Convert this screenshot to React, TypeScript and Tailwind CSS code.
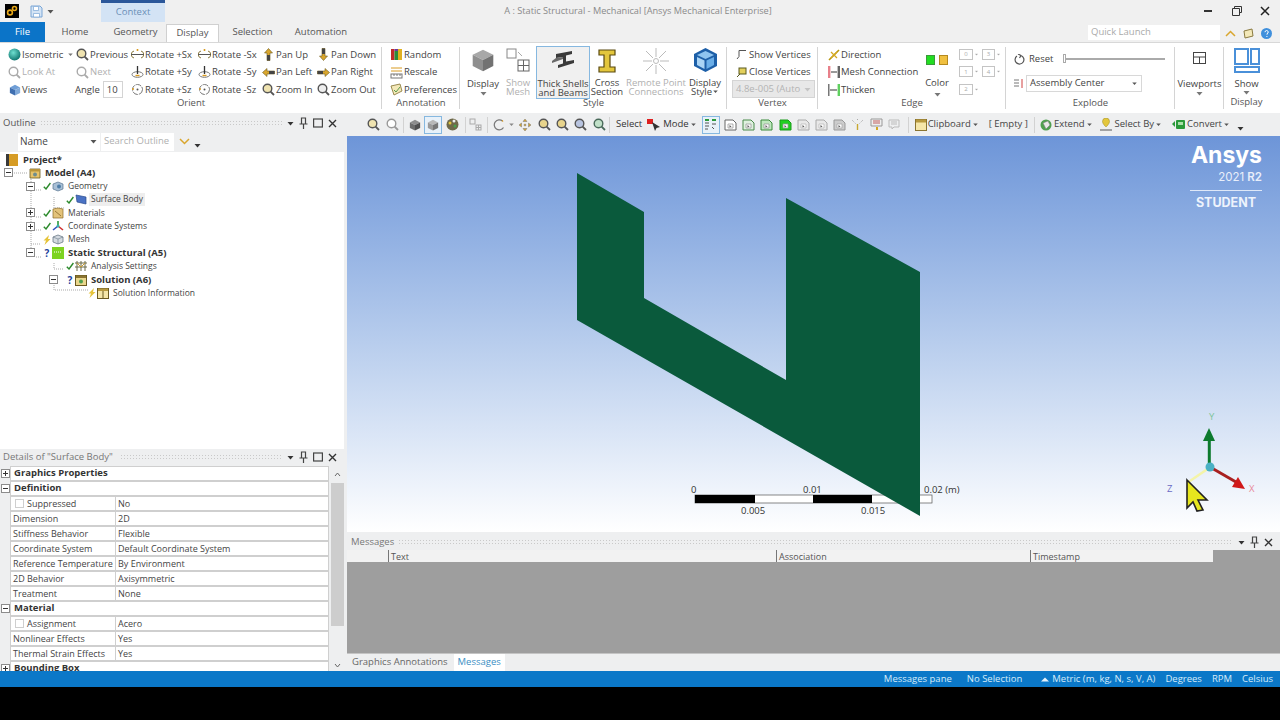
import React from "react";

type IconProps = { className?: string };

const Caret = ({ className = "fill-[#444]" }: IconProps) => (
	<svg width="7" height="5" viewBox="0 0 7 5" className={`shrink-0 ${className}`}>
		<path d="M0.5 1h6L3.5 4.5z" />
	</svg>
);

const Sphere = () => (
	<svg width="13" height="13" viewBox="0 0 13 13">
		<defs>
			<radialGradient id="sph" cx="0.4" cy="0.35" r="0.7">
				<stop offset="0" stopColor="#6fe0d0" />
				<stop offset="1" stopColor="#0a6f6a" />
			</radialGradient>
		</defs>
		<circle cx="6.5" cy="6.5" r="6" fill="url(#sph)" />
	</svg>
);

const Mag = ({ c = "#555", fill = "#efe3b0", faded = false }: { c?: string; fill?: string; faded?: boolean }) => (
	<svg width="13" height="13" viewBox="0 0 13 13" opacity={faded ? 0.45 : 1}>
		<circle cx="5.5" cy="5.5" r="4.3" fill={fill} stroke={c} strokeWidth="1.4" />
		<path d="M8.6 8.6L12 12" stroke={c} strokeWidth="1.8" />
	</svg>
);

const Rot = ({ axis }: { axis: "x" | "y" | "z" }) => (
	<svg width="13" height="13" viewBox="0 0 13 13" fill="none">
		{axis === "x" && (
			<>
				<path d="M3 10a3.6 3.6 0 0 1 0-7M10 3a3.6 3.6 0 0 1 0 7" stroke="#8a7a40" strokeWidth="1" />
				<path d="M0 6.5h13" stroke="#555" strokeWidth="1" />
				<path d="M6.5 1v2" stroke="#d89a20" strokeWidth="1.6" />
			</>
		)}
		{axis === "y" && (
			<>
				<ellipse cx="6.5" cy="8.5" rx="5.5" ry="2.8" stroke="#777" strokeWidth="1" />
				<path d="M6.5 0v8" stroke="#333" strokeWidth="1.3" />
				<path d="M4.5 9.5h4" stroke="#d89a20" strokeWidth="1.4" />
			</>
		)}
		{axis === "z" && (
			<>
				<circle cx="6.5" cy="6.5" r="5" stroke="#777" strokeWidth="1" strokeDasharray="6 1" />
				<circle cx="6.5" cy="6.5" r="1" fill="#555" />
				<path d="M1 6h2" stroke="#d89a20" strokeWidth="1.4" />
			</>
		)}
	</svg>
);

const Pan = ({ d }: { d: "up" | "down" | "left" | "right" }) => {
	const rot = { up: 0, right: 90, down: 180, left: 270 }[d];
	return (
		<svg width="13" height="13" viewBox="0 0 13 13">
			<g transform={`rotate(${rot} 6.5 6.5)`}>
				<path d="M6.5 0.5L10.5 5H8v7.5H5V5H2.5z" fill="#d9a62e" stroke="#6b5a20" strokeWidth="0.6" />
				<path d="M5 7h3v5.5H5z" fill="#444" />
			</g>
		</svg>
	);
};

const Box = ({ stroke = "#666", fill = "#fff", inner = "#999" }: { stroke?: string; fill?: string; inner?: string }) => (
	<svg width="13" height="13" viewBox="0 0 13 13">
		<path d="M1 2h8l3 3v7H1z" fill={fill} stroke={stroke} strokeWidth="1" />
		<path d="M4 6h5v4H4z" fill="#fff" stroke={inner} strokeWidth="0.8" />
		<path d="M5.5 7l2 1.5-2 1z" fill="#555" />
	</svg>
);

const Cube = ({ top = "#8d8d8d", left = "#6d6d6d", right = "#4f4f4f", s = 14 }: { top?: string; left?: string; right?: string; s?: number }) => (
	<svg width={s} height={s} viewBox="0 0 14 14">
		<path d="M7 1l6 3-6 3-6-3z" fill={top} />
		<path d="M1 4l6 3v6.5l-6-3z" fill={left} />
		<path d="M13 4L7 7v6.5l6-3z" fill={right} />
	</svg>
);

const Check = () => (
	<svg width="8" height="8" viewBox="0 0 8 8" fill="none" className="shrink-0">
		<path d="M0.8 4.8L3 7l4.4-6" stroke="#2c8a2c" strokeWidth="1.4" />
	</svg>
);
const Bolt = () => (
	<svg width="8" height="10" viewBox="0 0 8 10" className="shrink-0">
		<path d="M6 0L0.5 5.5H3L1.5 10 7.5 4H5z" fill="#e6c43a" />
	</svg>
);
const Quest = () => <span className="w-[8px] shrink-0 text-center text-[10px] font-bold leading-none text-[#1e3f9c]">?</span>;

const Expander = ({ open = true }: { open?: boolean }) => (
	<svg width="9" height="9" viewBox="0 0 9 9" className="shrink-0">
		<rect x="0.5" y="0.5" width="8" height="8" fill="#fff" stroke="#8c8c8c" />
		<path d="M2 4.5h5" stroke="#333" />
		{!open && <path d="M4.5 2v5" stroke="#333" />}
	</svg>
);

// outline tree icons
const Folder = ({ fill = "#e7c36a" }: { fill?: string }) => (
	<svg width="12" height="12" viewBox="0 0 12 12">
		<path d="M1 2h10v9H1z" fill={fill} stroke="#6b5a20" strokeWidth="0.8" />
		<path d="M1 2h10v2.5H1z" fill="#b99438" />
		<circle cx="6" cy="7.5" r="2" fill="#6f8d8d" />
	</svg>
);
const ProjectIcon = () => (
	<svg width="12" height="12" viewBox="0 0 12 12">
		<path d="M0 0h3v12H0z" fill="#3a3a3a" />
		<path d="M3 0h9v12H3z" fill="#d69c25" />
	</svg>
);
const GeoIcon = () => (
	<svg width="12" height="11" viewBox="0 0 12 11">
		<path d="M1 3l5-2 5 2v5l-5 2-5-2z" fill="#a9c0d6" stroke="#56738f" strokeWidth="0.7" />
		<circle cx="7" cy="5.5" r="2" fill="#4f7ea8" />
	</svg>
);
const SurfIcon = () => (
	<svg width="12" height="11" viewBox="0 0 12 11">
		<path d="M1 1l10 2v7L2 8z" fill="#4a72c4" stroke="#2a4a8c" strokeWidth="0.7" />
	</svg>
);
const MatIcon = () => (
	<svg width="12" height="12" viewBox="0 0 12 12">
		<path d="M1 2l5-1 5 1v9H1z" fill="#e3c37a" stroke="#8a6a28" strokeWidth="0.7" />
		<path d="M3 4l6 5" stroke="#9a7a3a" />
	</svg>
);
const CoordIcon = () => (
	<svg width="12" height="12" viewBox="0 0 12 12">
		<path d="M6 1v5" stroke="#2a9a3a" strokeWidth="1.6" />
		<path d="M6 6l5 4" stroke="#d03030" strokeWidth="1.6" />
		<path d="M6 6l-5 4" stroke="#3050c0" strokeWidth="1.6" />
		<circle cx="6" cy="6" r="1.5" fill="#3ab0b0" />
	</svg>
);
const MeshIcon = () => (
	<svg width="12" height="11" viewBox="0 0 12 11">
		<path d="M1 3l5-2 5 2v5l-5 2-5-2z" fill="#d4dae0" stroke="#6a7a88" strokeWidth="0.8" />
		<path d="M1 3l5 2 5-2M6 5v5" stroke="#6a7a88" strokeWidth="0.6" fill="none" />
	</svg>
);
const StaticIcon = () => (
	<svg width="12" height="12" viewBox="0 0 12 12">
		<rect width="12" height="12" fill="#7ed321" />
		<path d="M2 5h8" stroke="#fff" strokeDasharray="1 1" />
	</svg>
);
const SettingsIcon = () => (
	<svg width="12" height="12" viewBox="0 0 12 12" fill="none" stroke="#6a6a4a">
		<path d="M2 1v10M6 1v10M10 1v10M0 3h12M0 7h12" />
		<path d="M2 3l4 4 4-4" stroke="#c89a30" />
	</svg>
);
const SolIcon = () => (
	<svg width="12" height="12" viewBox="0 0 12 12">
		<rect x="0.5" y="1.5" width="11" height="10" fill="#e9d68c" stroke="#6b5a20" />
		<path d="M1 1.5h10v2.5H1z" fill="#8a7430" />
		<circle cx="6" cy="7.5" r="2" fill="#4fa04f" />
	</svg>
);
const InfoIcon = () => (
	<svg width="12" height="12" viewBox="0 0 12 12">
		<rect x="0.5" y="1.5" width="11" height="10" fill="#f5e6a8" stroke="#6b5a20" />
		<path d="M1 1.5h10v2.5H1z" fill="#b7993e" />
		<path d="M6 4v7" stroke="#6b5a20" />
	</svg>
);

const Grip = () => <div className="h-[6px] flex-1 bg-[radial-gradient(#c9c9c9_0.7px,transparent_0.8px)] bg-[length:3px_3px]" />;

const PaneButtons = ({ max = true }: { max?: boolean }) => (
	<div className="ml-[5px] flex items-center gap-[5px]">
		<Caret className="fill-[#333]" />
		<svg width="9" height="12" viewBox="0 0 9 12" fill="none" stroke="#444" strokeWidth="1.2">
			<path d="M2.5 1h4v6h-4zM0.5 7h8M4.5 7v5" />
		</svg>
		{max && (
			<svg width="10" height="10" viewBox="0 0 10 10" fill="none" stroke="#444" strokeWidth="1.2">
				<rect x="0.6" y="1" width="8.8" height="8" />
			</svg>
		)}
		<svg width="9" height="9" viewBox="0 0 9 9" stroke="#333" strokeWidth="1.4">
			<path d="M1 1l7 7M8 1l-7 7" />
		</svg>
	</div>
);

const Item = ({ icon, label, off }: { icon?: React.ReactNode; label: string; off?: boolean }) => (
	<div className={`flex h-[17.5px] items-center whitespace-nowrap ${off ? "text-[#b0b0b0]" : ""}`}>
		<span className="mr-px flex w-[13px] shrink-0 items-center justify-center">{icon}</span>
		{label}
	</div>
);

const Group = ({ label, width, children }: { label: string; width: string; children: React.ReactNode }) => (
	<div className={`relative flex h-full shrink-0 flex-col ${width}`}>
		<div className="flex h-[53px]">{children}</div>
		<div className="flex h-[14px] items-center justify-center whitespace-nowrap text-[#555]">{label}</div>
		<div className="absolute right-0 top-[4px] h-[62px] w-px bg-[#d4d4d4]" />
	</div>
);

const Big = ({ width, icon, lines, off, caret, boxed }: { width: string; icon: React.ReactNode; lines: string[]; off?: boolean; caret?: boolean; boxed?: boolean }) => (
	<div className={`flex shrink-0 flex-col items-center ${width} ${off ? "text-[#b0b0b0]" : ""}`}>
		<div className={`flex justify-center ${boxed ? "h-[32px] pt-[3px]" : "h-[36px] pt-[5px]"}`}>{icon}</div>
		{lines.map((l) => (
			<div key={l} className="h-[9px] whitespace-nowrap leading-[9px]">{l}</div>
		))}
		{caret && <div className="mt-[3px]"><Caret className="fill-[#777]" /></div>}
	</div>
);

const SmallBox = ({ n }: { n: string }) => (
	<div className="flex h-[14px] items-center">
		<div className="flex h-[11px] w-[14px] items-center justify-center border border-[#c4c4c4] text-[6px] leading-none text-[#aaa]">{n}</div>
		<Caret className="scale-50 fill-[#aaa]" />
	</div>
);

const Tb = ({ children, active, ml = "" }: { children: React.ReactNode; active?: boolean; ml?: string }) => (
	<div className={`flex h-[18px] w-[18px] shrink-0 items-center justify-center ${ml} ${active ? "border border-[#86b8e0] bg-[#e8f1f9]" : ""}`}>{children}</div>
);
const TbSep = ({ ml = "ml-[2px]" }: { ml?: string }) => <div className={`h-[16px] w-px shrink-0 bg-[#d2d2d2] ${ml}`} />;

type TreeRow = { level: string; exp?: "open" | "closed"; status?: React.ReactNode; icon: React.ReactNode; label: string; bold?: boolean; sel?: boolean };

const tree: TreeRow[] = [
	{ level: "pl-[26px]", exp: "open", status: <Check />, icon: <GeoIcon />, label: "Geometry" },
	{ level: "pl-[49px]", status: <Check />, icon: <SurfIcon />, label: "Surface Body", sel: true },
	{ level: "pl-[26px]", exp: "closed", status: <Check />, icon: <MatIcon />, label: "Materials" },
	{ level: "pl-[26px]", exp: "closed", status: <Check />, icon: <CoordIcon />, label: "Coordinate Systems" },
	{ level: "pl-[26px]", status: <Bolt />, icon: <MeshIcon />, label: "Mesh" },
	{ level: "pl-[26px]", exp: "open", status: <Quest />, icon: <StaticIcon />, label: "Static Structural (A5)", bold: true },
	{ level: "pl-[49px]", status: <Check />, icon: <SettingsIcon />, label: "Analysis Settings" },
	{ level: "pl-[49px]", exp: "open", status: <Quest />, icon: <SolIcon />, label: "Solution (A6)", bold: true },
	{ level: "pl-[71px]", status: <Bolt />, icon: <InfoIcon />, label: "Solution Information" },
];

const details: { head?: string; closed?: boolean; k?: string; v?: string; box?: boolean }[] = [
	{ head: "Graphics Properties", closed: true },
	{ head: "Definition" },
	{ k: "Suppressed", v: "No", box: true },
	{ k: "Dimension", v: "2D" },
	{ k: "Stiffness Behavior", v: "Flexible" },
	{ k: "Coordinate System", v: "Default Coordinate System" },
	{ k: "Reference Temperature", v: "By Environment" },
	{ k: "2D Behavior", v: "Axisymmetric" },
	{ k: "Treatment", v: "None" },
	{ head: "Material" },
	{ k: "Assignment", v: "Acero", box: true },
	{ k: "Nonlinear Effects", v: "Yes" },
	{ k: "Thermal Strain Effects", v: "Yes" },
	{ head: "Bounding Box", closed: true },
];

const App: React.FC = () => {
	return (
		<div className="flex h-[720px] w-[1280px] flex-col overflow-hidden bg-black font-['Open_Sans',sans-serif] text-[9.5px] text-[#444]">
			{/* title bar */}
			<div className="flex h-[22px] shrink-0 items-center bg-[#f0f0f0]">
				<div className="ml-[5px] flex h-[14px] w-[14px] items-center justify-center bg-black">
					<svg width="12" height="12" viewBox="0 0 12 12" fill="none" stroke="#e8a818" strokeWidth="1.6">
						<circle cx="4" cy="7.5" r="2.4" />
						<circle cx="8.5" cy="3.5" r="2" />
					</svg>
				</div>
				<svg width="13" height="13" viewBox="0 0 13 13" fill="none" className="ml-[11px]">
					<path d="M1 1h9l2 2v9H1z" fill="#d4e4f5" stroke="#7aa6d6" />
					<path d="M3.5 1.5h5v4h-5zM3.5 8.5h6V12h-6z" fill="#fff" stroke="#7aa6d6" strokeWidth="0.7" />
				</svg>
				<Caret className="ml-[4px] fill-[#555]" />
				<div className="ml-[47px] flex h-[22px] w-[64px] items-center justify-center border-t-[3px] border-[#2b579a] bg-[#d3e3f5] text-[#6a8fb8]">Context</div>
				<div className="ml-[278px] w-[390px] text-center text-[9.2px] text-[#8a8a8a]">A : Static Structural - Mechanical [Ansys Mechanical Enterprise]</div>
				<div className="ml-auto flex items-center">
					<div className="h-[2px] w-[8px] bg-[#333]" />
					<svg width="10" height="10" viewBox="0 0 10 10" fill="none" stroke="#333" className="ml-[20px]">
						<path d="M2.5 2.5V0.5h7v6h-2M0.5 2.5h7v7h-7z" />
					</svg>
					<svg width="10" height="10" viewBox="0 0 10 10" stroke="#222" strokeWidth="1.5" className="mx-[10px] ml-[18px]">
						<path d="M1 1l8 8M9 1l-8 8" />
					</svg>
				</div>
			</div>
			{/* tabs */}
			<div className="flex h-[20px] shrink-0 items-end bg-[#f0f0f0] text-[#555]">
				<div className="flex h-[20px] w-[45px] items-center justify-center bg-[#0b74c8] text-white">File</div>
				<div className="flex h-[19px] w-[60px] items-center justify-center">Home</div>
				<div className="flex h-[19px] w-[61px] items-center justify-center">Geometry</div>
				<div className="mb-[-1px] flex h-[19px] w-[53px] items-center justify-center border border-b-0 border-[#d0d0d0] bg-white pb-px">Display</div>
				<div className="flex h-[19px] w-[67px] items-center justify-center">Selection</div>
				<div className="flex h-[19px] w-[70px] items-center justify-center">Automation</div>
				<div className="relative mb-[2px] ml-auto mr-[60px] flex h-[15px] w-[132px] items-center bg-white pl-[3px] text-[#aaa]">
					Quick Launch
					<div className="absolute left-[137px] top-[3px] flex items-center gap-[7px]">
						<svg width="11" height="7" viewBox="0 0 11 7" fill="none" stroke="#d9a62e" strokeWidth="1.5"><path d="M1 6l4.5-4.5L10 6" /></svg>
						<svg width="11" height="11" viewBox="0 0 11 11" fill="#f3e8b8" stroke="#8a7a40"><path d="M1 3l8-2 1 7-8 2z" /></svg>
						<svg width="11" height="11" viewBox="0 0 11 11"><circle cx="5.5" cy="5.5" r="5.5" fill="#3f8fdc" /><path d="M4 4.2a1.6 1.6 0 1 1 2 1.5v1M5.9 8v1" stroke="#fff" fill="none" /></svg>
					</div>
				</div>
			</div>
			{/* ribbon */}
			<div className="flex h-[71px] shrink-0 border-t border-[#d8d8d8] bg-white">
				<Group label="Orient" width="w-[382px]">
					<div className="flex pl-[8px] pt-[3px]">
						<div className="w-[68px]">
							<div className="flex h-[17.5px] items-center whitespace-nowrap"><span className="mr-px flex w-[13px] items-center"><Sphere /></span>Isometric<Caret className="ml-[4px] scale-75 fill-[#777]" /></div>
							<Item off icon={<Mag c="#aaa" fill="#fff" />} label="Look At" />
							<Item icon={<Cube top="#6f9ed6" left="#3f6fb0" right="#7fa8d8" s={12} />} label="Views" />
						</div>
						<div className="w-[55px]">
							<Item icon={<Mag />} label="Previous" />
							<Item off icon={<Mag c="#aaa" fill="#fff" />} label="Next" />
							<div className="flex h-[17.5px] items-center">
								<span className="-ml-px">Angle</span>
								<div className="ml-[3px] flex h-[17px] w-[20px] shrink-0 items-center border border-[#d4d4d4] pl-[3px]">10</div>
							</div>
						</div>
						<div className="w-[67px]">
							<Item icon={<Rot axis="x" />} label="Rotate +Sx" />
							<Item icon={<Rot axis="y" />} label="Rotate +Sy" />
							<Item icon={<Rot axis="z" />} label="Rotate +Sz" />
						</div>
						<div className="w-[64px]">
							<Item icon={<Rot axis="x" />} label="Rotate -Sx" />
							<Item icon={<Rot axis="y" />} label="Rotate -Sy" />
							<Item icon={<Rot axis="z" />} label="Rotate -Sz" />
						</div>
						<div className="w-[55px]">
							<Item icon={<Pan d="up" />} label="Pan Up" />
							<Item icon={<Pan d="left" />} label="Pan Left" />
							<Item icon={<Mag />} label="Zoom In" />
						</div>
						<div className="w-[55px]">
							<Item icon={<Pan d="down" />} label="Pan Down" />
							<Item icon={<Pan d="right" />} label="Pan Right" />
							<Item icon={<Mag fill="#eee" />} label="Zoom Out" />
						</div>
					</div>
				</Group>
				<Group label="Annotation" width="w-[78px]">
					<div className="pl-[8px] pt-[3px]">
						<Item icon={<svg width="13" height="13" viewBox="0 0 13 13"><path d="M1 1h3.5v11H1z" fill="#c02a2a" /><path d="M4.5 3H8v9H4.5z" fill="#2a8a3a" /><path d="M8 1h4v11H8z" fill="#e0b020" /><path d="M4.5 1H8v2H4.5z" fill="#6a3aa0" /></svg>} label="Random" />
						<Item icon={<svg width="13" height="13" viewBox="0 0 13 13" fill="none" stroke="#777"><path d="M1 2h11" stroke="#d89a20" /><path d="M1 5h11" stroke="#d89a20" /><rect x="1" y="8" width="11" height="4" /><path d="M4 8v2M7 8v2M10 8v2" /></svg>} label="Rescale" />
						<Item icon={<svg width="13" height="13" viewBox="0 0 13 13"><path d="M1 3l9-2 2 7-8 4z" fill="#f3e8b8" stroke="#9a8a50" /><path d="M4 7l2 2 4-5" fill="none" stroke="#5a9a4a" /></svg>} label="Preferences" />
					</div>
				</Group>
				<Group label="Style" width="w-[267px]">
					<div className="flex pl-[6px]">
						<Big width="w-[34px]" lines={["Display"]} caret icon={<Cube s={24} top="#a8a8a8" left="#8f8f8f" right="#727272" />} />
						<Big width="w-[36px]" off lines={["Show", "Mesh"]} icon={
							<svg width="24" height="24" viewBox="0 0 24 24" fill="none" stroke="#666"><rect x="1" y="1" width="9" height="9" stroke="#888" /><path d="M12 4l4 4" stroke="#aaa" /><rect x="12" y="12" width="11" height="11" /><path d="M17.5 12v11M12 17.5h11" /></svg>
						} />
						<div className="shrink-0 pt-[3px]">
							<Big boxed width="h-[53px] w-[54px] border border-[#86b8e0] bg-[#f0f0f0]" lines={["Thick Shells", "and Beams"]} icon={
								<svg width="26" height="20" viewBox="0 0 26 20"><path d="M6 4l16-3v3l-6 1.5v6L24 10v3L8 18v-3l5-1.5V7L6 8z" fill="#3a3a3a" /><path d="M6 8l7-1v2L2 13v-2z" fill="#6a6a6a" /></svg>
							} />
						</div>
						<Big width="w-[34px]" lines={["Cross", "Section"]} icon={
							<svg width="20" height="26" viewBox="0 0 20 26"><path d="M2 2h16v5h-5v12h5v5H2v-5h5V7H2z" fill="#e3c63c" stroke="#5a4a10" strokeWidth="1.2" /></svg>
						} />
						<Big width="w-[64px]" off lines={["Remote Point", "Connections"]} icon={
							<svg width="26" height="26" viewBox="0 0 26 26" stroke="#bbb" fill="none"><circle cx="13" cy="13" r="2.5" /><path d="M13 0v9M13 17v9M0 13h9M17 13h9M3 3l7 7M23 3l-7 7M3 23l7-7M23 23l-7-7" /></svg>
						} />
						<div className="flex w-[34px] shrink-0 flex-col items-center">
							<div className="flex h-[36px] pt-[4px]">
								<svg width="25" height="26" viewBox="0 0 25 26"><path d="M12.5 1L24 7v12l-11.5 6L1 19V7z" fill="#1d5fa8" /><path d="M12.5 4L21 8l-8.5 4L4 8z" fill="#8ec4f0" /><path d="M4 10l7.5 3.5V22L4 18z" fill="#aad4f5" /><path d="M21 10l-7.5 3.5V22l7.5-4z" fill="#6aaee8" /></svg>
							</div>
							<div className="h-[9px] leading-[9px]">Display</div>
							<div className="flex h-[9px] items-center leading-[9px]">Style<Caret className="scale-75 fill-[#555]" /></div>
						</div>
					</div>
				</Group>
				<Group label="Vertex" width="w-[91px]">
					<div className="pl-[8px] pt-[3px]">
						<Item icon={<svg width="11" height="11" viewBox="0 0 11 11" fill="none" stroke="#555"><path d="M3 1.5h7M3 1.500v6M3 7.500L1 10" /></svg>} label=" Show Vertices" />
						<Item icon={<svg width="11" height="11" viewBox="0 0 11 11" fill="#e3d05c" stroke="#5a5a20"><rect x="3" y="1" width="7" height="6" /><path d="M1 10l3-3" /></svg>} label=" Close Vertices" />
						<div className="ml-[-3px] mt-[-1px] flex h-[18px] w-[83px] items-center border border-[#d4d4d4] bg-[#e8e8e8] pl-[3px] text-[#b4b4b4]">4.8e-005 (Auto<Caret className="ml-auto mr-[3px] fill-[#c4c4c4]" /></div>
					</div>
				</Group>
				<Group label="Edge" width="w-[188px]">
					<div className="flex pl-[9px] pt-[3px]">
						<div className="w-[92px]">
							<Item icon={<svg width="12" height="12" viewBox="0 0 12 12"><path d="M1 11L11 1" stroke="#b8960f" strokeWidth="1.6" /><path d="M3 3l6 6M9 3L3 9" stroke="#d4a820" strokeWidth="1.3" /></svg>} label="Direction" />
							<Item icon={<svg width="12" height="12" viewBox="0 0 12 12"><path d="M0 0h2.4v12H0z" fill="#e8808a" /><path d="M9.6 0H12v12H9.6z" fill="#666" /><path d="M3 6h6" stroke="#333" /></svg>} label="Mesh Connection" />
							<Item icon={<svg width="12" height="12" viewBox="0 0 12 12"><path d="M9.6 0H12v12H9.6z" fill="#5fd05f" /><path d="M0 0h1.500v12H0z" fill="#777" /><path d="M2 6h7" stroke="#333" /></svg>} label="Thicken" />
						</div>
						<div className="flex w-[36px] flex-col items-center">
							<div className="mt-[9px] flex gap-[4px]">
								<div className="h-[10px] w-[9px] border border-[#3a9a3a] bg-[#22dd22]" />
								<div className="h-[10px] w-[9px] border border-[#b58a20] bg-[#f0c040]" />
							</div>
							<div className="mt-[11px]">Color</div>
							<div className="mt-[2px]"><Caret className="fill-[#777]" /></div>
						</div>
						<div className="ml-[4px] flex w-[23px] flex-col gap-[3.5px] pt-[1px]">
							<SmallBox n="0" />
							<SmallBox n="1" />
							<SmallBox n="2" />
						</div>
						<div className="flex w-[20px] flex-col gap-[3.5px] pt-[1px]">
							<SmallBox n="3" />
							<SmallBox n="4" />
						</div>
					</div>
				</Group>
				<Group label="Explode" width="w-[169px]">
					<div className="w-full pl-[8px]">
						<div className="flex h-[32px] items-center">
							<svg width="11" height="11" viewBox="0 0 11 11" fill="none" stroke="#555" strokeWidth="1.2"><path d="M7 1.5a4.4 4.4 0 1 1-4 .5M7 1.500L4 0M7 1.500L5.500 4" /></svg>
							<span className="ml-[4px]">Reset</span>
							<div className="relative ml-[10px] h-[2px] w-[102px] bg-[#aaa]">
								<div className="absolute left-0 top-[-4px] h-[9px] w-[3px] border border-[#aaa] bg-white" />
							</div>
						</div>
						<div className="flex items-center">
							<svg width="10" height="11" viewBox="0 0 10 11" fill="none" stroke="#777"><path d="M0 2h5M0 5h5M0 8h5" /><path d="M8 1v9" stroke="#d04040" /></svg>
							<div className="ml-[2px] flex h-[17px] w-[116px] items-center border border-[#d8d8d8] pl-[3px]">Assembly Center<Caret className="ml-auto mr-[3px] scale-75 fill-[#555]" /></div>
						</div>
					</div>
				</Group>
				<Group label="" width="w-[49px]">
					<div className="flex w-full flex-col items-center">
						<div className="flex h-[36px] pt-[9px]">
							<svg width="13" height="12" viewBox="0 0 13 12" fill="none" stroke="#444"><rect x="0.5" y="0.5" width="12" height="11" /><path d="M0.5 5h12M6.5 5v6.5" /></svg>
						</div>
						<div className="leading-[9px]">Viewports</div>
						<div className="mt-[3px]"><Caret className="fill-[#777]" /></div>
					</div>
				</Group>
				<div className="flex w-[45px] flex-col items-center">
					<div className="flex h-[36px] pt-[5px]">
						<svg width="26" height="25" viewBox="0 0 26 25" fill="none" stroke="#4a90d9" strokeWidth="2"><rect x="1" y="1" width="13" height="15" /><rect x="17" y="1" width="8" height="15" /><rect x="1" y="19" width="24" height="5" /></svg>
					</div>
					<div className="leading-[9px]">Show</div>
					<div className="mt-[2px]"><Caret className="fill-[#777]" /></div>
					<div className="text-[#555]">Display</div>
				</div>
			</div>
			{/* main */}
			<div className="flex min-h-0 flex-1">
				{/* left column */}
				<div className="flex w-[344px] shrink-0 flex-col bg-[#eeeff0]">
					<div className="flex h-[18px] shrink-0 items-center pl-[3px] pr-[7px] pt-[2px] text-[#555]">
						<span className="mr-[4px]">Outline</span>
						<Grip />
						<PaneButtons />
					</div>
					<div className="flex h-[21px] shrink-0 items-center pl-[18px]">
						<div className="flex h-[18px] w-[82px] items-center bg-white pl-[2px] text-[10px]">Name<Caret className="ml-auto mr-[3px] fill-[#555]" /></div>
						<div className="ml-px flex h-[18px] w-[73px] items-center bg-white pl-[3px] text-[#b0b0b0]">Search Outline</div>
						<svg width="11" height="7" viewBox="0 0 11 7" fill="none" stroke="#d9a62e" strokeWidth="1.5" className="ml-[5px]"><path d="M1 1l4.500 4.500L10 1" /></svg>
						<Caret className="ml-[4px] mt-[8px] fill-[#333]" />
					</div>
					<div className="relative h-[297px] shrink-0 bg-white pt-[1px]">
						<svg width="110" height="150" className="absolute left-0 top-0" fill="none" stroke="#a9a9a9" strokeDasharray="1 1">
							<path d="M14 21h14M31 25v75M36 38h6M54 45v11h10M36 65h6M36 78h6M31 92h10M36 105h6M54 111v6h10M54 125v13h35" />
						</svg>
						<div className="flex h-[13.33px] items-center pl-[6px] font-bold text-[#333]">
							<ProjectIcon />
							<span className="ml-[5px]">Project*</span>
						</div>
						<div className="relative flex h-[13.33px] items-center pl-[4px] font-bold text-[#333]">
							<Expander />
							<span className="ml-[16px]"><Folder /></span>
							<span className="ml-[4px]">Model (A4)</span>
						</div>
						{tree.map((r) => (
							<div key={r.label} className={`relative flex h-[13.33px] items-center ${r.level} ${r.bold ? "font-bold text-[#333]" : "text-[8.5px]"}`}>
								<span className="flex w-[10px] shrink-0 items-center">{r.exp && <Expander open={r.exp === "open"} />}</span>
								<span className="w-[7px] shrink-0" />
								{r.status}
								<span className="ml-px flex w-[12px] shrink-0 items-center">{r.icon}</span>
								<span className={`ml-[2px] px-[2px] ${r.sel ? "bg-[#eeeeee]" : ""}`}>{r.label}</span>
							</div>
						))}
					</div>
					<div className="flex h-[17px] shrink-0 items-center pb-px pl-[3px] pr-[7px] text-[#777]">
						<span className="mr-[7px]">Details of "Surface Body"</span>
						<Grip />
						<PaneButtons />
					</div>
					<div className="flex min-h-0 flex-1 overflow-hidden text-[9px]">
						<div className="w-[329px] shrink-0">
							{details.map((d) =>
								d.head ? (
									<div key={d.head} className="flex h-[15px] items-center">
										<div className="flex w-[10px] shrink-0 justify-center"><Expander open={!d.closed} /></div>
										<div className="flex h-full flex-1 items-center border border-[#cfcfcf] bg-white pl-[3px] text-[9.5px] font-bold text-[#333]">{d.head}</div>
									</div>
								) : (
									<div key={d.k} className="flex h-[15px] items-center">
										<div className="w-[10px] shrink-0" />
										<div className="flex h-full w-[106px] shrink-0 items-center whitespace-nowrap border border-[#cfcfcf] bg-white pl-[2px]">
											{d.box && <span className="ml-[2px] mr-[3px] h-[9px] w-[9px] border border-[#cfcfcf]" />}
											{d.k}
										</div>
										<div className="flex h-full flex-1 items-center border border-l-0 border-[#cfcfcf] bg-white pl-[2px]">{d.v}</div>
									</div>
								),
							)}
						</div>
						<div className="ml-[2px] flex w-[13px] flex-col items-center">
							<svg width="7" height="5" viewBox="0 0 7 5" fill="none" stroke="#666" className="my-[6px]"><path d="M1 4l2.500-3L6 4" /></svg>
							<div className="h-[143px] w-full bg-[#cdcdcd]" />
							<div className="flex-1" />
							<svg width="7" height="5" viewBox="0 0 7 5" fill="none" stroke="#666" className="mb-[3px]"><path d="M1 1l2.500 3L6 1" /></svg>
						</div>
					</div>
				</div>
				{/* right column */}
				<div className="flex min-w-0 flex-1 flex-col bg-[#eeeff0]">
					<div className="flex h-[23px] shrink-0 items-center pl-[20px]">
						<Tb><Mag /></Tb>
						<Tb ml="ml-px"><Mag c="#999" fill="#fff" /></Tb>
						<TbSep />
						<Tb ml="ml-[2px]"><Cube s={12} /></Tb>
						<Tb active><Cube s={12} top="#b8b8b8" left="#9a9a9a" right="#777" /></Tb>
						<Tb ml="ml-px"><svg width="13" height="13" viewBox="0 0 13 13"><circle cx="6.5" cy="6.5" r="6" fill="#6f6a4a" /><circle cx="4" cy="5" r="1.5" fill="#e3c63c" /><circle cx="8" cy="3" r="1.5" fill="#eee" /><circle cx="9" cy="8" r="1.5" fill="#4aa04a" /></svg></Tb>
						<TbSep ml="ml-[4px]" />
						<Tb><svg width="13" height="13" viewBox="0 0 13 13" fill="none" stroke="#aaa"><rect x="1" y="1" width="5" height="5" /><rect x="7" y="7" width="5" height="5" /><path d="M9.500 7v5M7 9.500h5" /></svg></Tb>
						<TbSep ml="ml-[3px]" />
						<Tb ml="ml-[2px]"><svg width="12" height="12" viewBox="0 0 12 12" fill="none" stroke="#777" strokeWidth="1.2"><path d="M9.500 2a5 5 0 1 0 1 6.500" /><path d="M10 2.500a5 5 0 0 0-1-1" stroke="#d89a20" /></svg></Tb>
						<Caret className="scale-75 fill-[#888]" />
						<Tb ml="ml-px"><svg width="12" height="12" viewBox="0 0 12 12" fill="#d9a62e" stroke="#777" strokeWidth="0.5"><path d="M6 0l2 2.500H4zM6 12L4 9.500h4zM0 6l2.500-2v4zM12 6L9.500 8V4z" /><circle cx="6" cy="6" r="1" /></svg></Tb>
						<Tb ml="ml-px"><Mag fill="#e8d48c" /></Tb>
						<Tb><Mag fill="#e8d48c" /></Tb>
						<Tb><Mag fill="#b8c4e0" /></Tb>
						<Tb ml="ml-px"><Mag c="#4a6a5a" fill="#c0e0c8" /></Tb>
						<TbSep ml="ml-px" />
						<span className="ml-[6px] text-[#333]">Select</span>
						<svg width="14" height="12" viewBox="0 0 14 12" className="ml-[5px]"><path d="M0 0h6v5H0z" fill="#dd2020" /><path d="M5 3l8 5-3.500 1L8 12z" fill="#333" /></svg>
						<span className="ml-[2px] text-[#333]">Mode</span>
						<Caret className="ml-[1px] scale-75 fill-[#555]" />
						<Tb active ml="ml-[5px]"><svg width="13" height="13" viewBox="0 0 13 13"><path d="M1 1h4v2H1zM8 1h4v2H8z" fill="#2a9a3a" /><path d="M1 5h4M1 8h4M1 11h3M8 6h4M8 9l2 2" stroke="#555" /></svg></Tb>
						<Tb ml="ml-[2px]"><Box /></Tb>
						<Tb><Box stroke="#4a8a4a" fill="#dff0df" /></Tb>
						<Tb><Box stroke="#3a8a3a" fill="#bfe8bf" /></Tb>
						<Tb ml="ml-px"><Box stroke="#1a9a1a" fill="#22d022" /></Tb>
						<Tb><Box stroke="#aaa" fill="#e8e8e8" inner="#bbb" /></Tb>
						<Tb><Box stroke="#aaa" fill="#e8e8e8" inner="#bbb" /></Tb>
						<Tb><Box stroke="#999" fill="#ccc" inner="#aaa" /></Tb>
						<Tb><svg width="13" height="13" viewBox="0 0 13 13" fill="none" stroke="#aaa"><path d="M6.500 12V6" stroke="#c8a830" strokeWidth="1.4" /><path d="M1 2l4 4M12 2L8 6M6.500 1v2" strokeDasharray="1 1" /></svg></Tb>
						<Tb ml="ml-px"><svg width="13" height="13" viewBox="0 0 13 13"><path d="M1 1h11v7H1z" fill="#eee" stroke="#999" /><path d="M3 3h7M3 5h7" stroke="#c06060" /><path d="M6 9h2v3H6z" fill="#d4a820" /></svg></Tb>
						<Tb><svg width="13" height="13" viewBox="0 0 13 13" fill="none" stroke="#bbb"><path d="M1 2h10v7H6l-2 2V9H1z" /><path d="M3 4h6M3 6h6" /></svg></Tb>
						<TbSep ml="ml-[4px]" />
						<svg width="12" height="13" viewBox="0 0 12 13" className="ml-[6px]"><rect x="0.5" y="1.5" width="11" height="11" fill="#f5e6a8" stroke="#8a7430" /><path d="M1 1.500h10v3H1z" fill="#b7993e" /></svg>
						<span className="ml-px">Clipboard</span>
						<Caret className="ml-[1px] scale-75 fill-[#555]" />
						<span className="ml-[10px]">[ Empty ]</span>
						<TbSep ml="ml-[6px]" />
						<svg width="12" height="12" viewBox="0 0 12 12" className="ml-[5px]"><circle cx="6" cy="6" r="5.500" fill="#4fa04f" /><path d="M3 4l5-2 2 4-4 4z" fill="#e8e8e8" stroke="#777" strokeWidth="0.5" /></svg>
						<span className="ml-[2px]">Extend</span>
						<Caret className="ml-[1px] scale-75 fill-[#555]" />
						<svg width="12" height="13" viewBox="0 0 12 13" className="ml-[7px]"><path d="M6 0a3.500 3.500 0 0 1 3.500 3.500C9.500 6 6 9 6 9S2.500 6 2.500 3.500A3.500 3.500 0 0 1 6 0z" fill="#e3c63c" stroke="#9a8a20" strokeWidth="0.5" /><path d="M0 12h12" stroke="#555" /></svg>
						<span className="ml-[3px]">Select By</span>
						<Caret className="ml-[1px] scale-75 fill-[#555]" />
						<svg width="13" height="11" viewBox="0 0 13 11" className="ml-[10px]"><path d="M0 5l3-3v6z" fill="#2a9a3a" /><rect x="4" y="1" width="9" height="9" rx="1" fill="#2a9a3a" /><rect x="6" y="3" width="5" height="3" fill="#a8e0a8" /></svg>
						<span className="ml-[2px]">Convert</span>
						<Caret className="ml-[1px] scale-75 fill-[#555]" />
						<Caret className="ml-[7px] mt-[8px] fill-[#333]" />
					</div>
					{/* graphics */}
					<div className="relative ml-[3px] h-[396px] shrink-0 overflow-hidden bg-gradient-to-b from-[#6d95d8] via-[#bcd0ee] via-55% to-white">
						<svg width="933" height="396" viewBox="347 136 933 396" className="absolute left-0 top-0">
							<rect x="695" y="495" width="237" height="8" fill="#fff" stroke="#555" strokeWidth="0.7" />
							<rect x="695" y="495" width="60" height="8" fill="#000" />
							<rect x="813" y="495" width="59" height="8" fill="#000" />
							<path d="M577 173L644 212V298L786 380V198L920 272V516L577 320Z" fill="#0a5a3c" />
							<path d="M1187 483L1209 468" stroke="#f4f4a8" strokeWidth="2.5" />
							<rect x="1207.8" y="440" width="3" height="28" fill="#0d7a2d" />
							<path d="M1209 428L1215 441H1203Z" fill="#0d7a2d" />
							<path d="M1210 467L1236 482" stroke="#a82020" strokeWidth="3" />
							<path d="M1245 489L1232 487L1238 477Z" fill="#d01818" />
							<circle cx="1210" cy="467" r="4.5" fill="#4ab0c4" />
							<path d="M1187 480L1207 500H1198L1203 510L1197 511L1193 502L1187 508Z" fill="#e6e61e" stroke="#222" strokeWidth="1.6" />
						</svg>
						<div className="absolute left-[344px] top-[347px] text-[#333]">0</div>
						<div className="absolute left-[456px] top-[347px] text-[#333]">0.01</div>
						<div className="absolute left-[577px] top-[347px] text-[#333]">0.02 (m)</div>
						<div className="absolute left-[394px] top-[368px] text-[#333]">0.005</div>
						<div className="absolute left-[514px] top-[368px] text-[#333]">0.015</div>
						<div className="absolute left-[862px] top-[274px] text-[#7fc49a]">Y</div>
						<div className="absolute left-[902px] top-[346px] text-[#e88a9a]">X</div>
						<div className="absolute left-[820px] top-[346px] text-[#6a6ac4]">Z</div>
						{/* logo */}
						<div className="absolute right-[18px] top-[4px] flex w-[72px] flex-col items-end font-['Inter',sans-serif] text-white">
							<div className="text-[23px] font-bold leading-[30px]">Ansys</div>
							<div className="text-[11.5px] leading-[14px] text-[#e8eefa]">2021 <span className="font-semibold">R2</span></div>
							<div className="my-[6px] h-px w-full bg-[#dfe8f8]" />
							<div className="w-full whitespace-nowrap text-center text-[12.5px] font-bold leading-[12px] text-[#eef3fc]">STUDENT</div>
						</div>
					</div>
					{/* messages */}
					<div className="ml-[3px] flex min-h-0 flex-1 flex-col">
						<div className="flex h-[18px] shrink-0 items-center pl-[4px] pr-[7px] pt-[2px] text-[#777]">
							<span className="mr-[4px]">Messages</span>
							<Grip />
							<PaneButtons max={false} />
						</div>
						<div className="flex h-[12px] shrink-0 bg-[#9e9e9e] text-[9px] leading-[13px] text-[#555]">
							<div className="w-[41px] bg-[#f2f2f2]" />
							<div className="w-[388px] border-l border-[#777] bg-[#f2f2f2] pl-[2px]">Text</div>
							<div className="w-[254px] border-l border-[#777] bg-[#f2f2f2] pl-[2px]">Association</div>
							<div className="w-[183px] border-l border-[#777] bg-[#f2f2f2] pl-[2px]">Timestamp</div>
						</div>
						<div className="h-[92px] shrink-0 border-b border-[#c4c4c4] bg-[#9e9e9e]" />
						<div className="flex min-h-0 flex-1 items-stretch text-[#666]">
							<div className="flex items-center pl-[5px] pr-[6px]">Graphics Annotations</div>
							<div className="flex items-center bg-white px-[4px] text-[#3b8fc4]">Messages</div>
						</div>
					</div>
				</div>
			</div>
			{/* status */}
			<div className="flex h-[16px] shrink-0 items-center justify-end bg-[#0b78c8] pr-[7px] text-[#d6ecfa]">
				<span>Messages pane</span>
				<span className="ml-[15px]">No Selection</span>
				<svg width="8" height="5" viewBox="0 0 8 5" className="ml-[19px] fill-[#e4f2fb]"><path d="M0 4.5L4 0.5l4 4z" /></svg>
				<span className="ml-[3px]">Metric (m, kg, N, s, V, A)</span>
				<span className="ml-[10px]">Degrees</span>
				<span className="ml-[10px]">RPM</span>
				<span className="ml-[10px]">Celsius</span>
			</div>
			<div className="h-[33px] shrink-0 bg-black" />
		</div>
	);
};

export default App;
